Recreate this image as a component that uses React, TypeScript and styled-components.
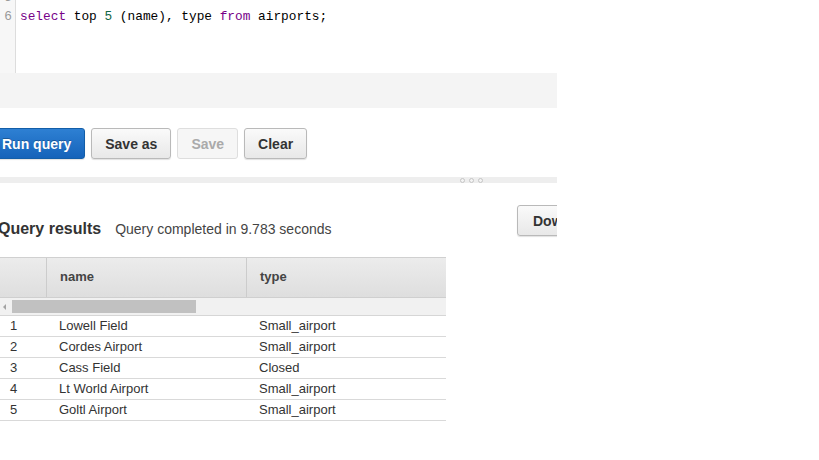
import React from "react";
import styled, { createGlobalStyle } from "styled-components";

const Global = createGlobalStyle`
  html, body { margin: 0; padding: 0; background: #fff; }
  body { font-family: "Liberation Sans", Arial, sans-serif; }
`;

const Page = styled.div`
  width: 557px;
  overflow: hidden;
  display: flex;
  flex-direction: column;
`;

const Editor = styled.div`
  height: 73px;
  display: flex;
  overflow: hidden;
  background: #fff;
`;

const Gutter = styled.div`
  width: 15px;
  background: #f7f7f7;
  border-right: 1px solid #dddddd;
  display: flex;
  flex-direction: column;
  margin-top: -12px;
`;

const LineNo = styled.div`
  height: 19px;
  line-height: 19px;
  font-family: "Liberation Mono", "DejaVu Sans Mono", monospace;
  font-size: 12.8px;
  color: #999;
  text-align: right;
  padding-right: 3px;
`;

const Code = styled.div`
  display: flex;
  flex-direction: column;
  margin-top: -12px;
  padding-left: 4px;
`;

const CodeLine = styled.div`
  height: 19px;
  line-height: 19px;
  font-family: "Liberation Mono", "DejaVu Sans Mono", monospace;
  font-size: 12.8px;
  color: #000;
  white-space: pre;
`;

const Kw = styled.span`
  color: #770088;
`;

const Num = styled.span`
  color: #116644;
`;

const EditorFooter = styled.div`
  height: 35px;
  background: #f4f4f4;
`;

const Toolbar = styled.div`
  height: 69px;
  display: flex;
  align-items: center;
  gap: 6px;
  padding-top: 2px;
  box-sizing: border-box;
`;

const Button = styled.button<{ $variant?: "primary" | "default" | "disabled" }>`
  height: 31px;
  padding: 0 13px;
  border-radius: 3px;
  font-family: "Liberation Sans", Arial, sans-serif;
  font-weight: bold;
  font-size: 14px;
  white-space: nowrap;
  cursor: pointer;
  border: 1px solid
    ${(p) => (p.$variant === "primary" ? "#135ea8" : p.$variant === "disabled" ? "#dedede" : "#b9b9b9")};
  background: ${(p) =>
    p.$variant === "primary"
      ? "linear-gradient(#2e80d3, #1563ba)"
      : p.$variant === "disabled"
      ? "#f6f6f6"
      : "linear-gradient(#fafafa, #e8e8e8)"};
  color: ${(p) => (p.$variant === "primary" ? "#fff" : p.$variant === "disabled" ? "#aaaaaa" : "#333")};
  text-shadow: ${(p) => (p.$variant === "primary" ? "0 -1px 0 rgba(0,0,0,0.25)" : "none")};
  box-shadow: ${(p) => (p.$variant === "disabled" ? "none" : "0 1px 1px rgba(0,0,0,0.12)")};
`;

const RunButton = styled(Button)`
  margin-left: -4px;
  padding: 0 13px 0 5px;
`;

const Splitter = styled.div`
  height: 6px;
  background: #eeeeee;
  display: flex;
  justify-content: flex-start;
  align-items: center;
  gap: 4px;
  padding-left: 460px;
`;

const Dot = styled.span`
  width: 5px;
  height: 5px;
  border-radius: 50%;
  box-sizing: border-box;
  border: 1px solid #c4c4c4;
  background: #f4f4f4;
`;

const ResultsHeader = styled.div`
  height: 74px;
  display: flex;
  align-items: flex-start;
  justify-content: space-between;
`;

const TitleGroup = styled.div`
  display: flex;
  align-items: baseline;
  margin-top: 37px;
  margin-left: -2px;
`;

const Title = styled.span`
  font-size: 16px;
  font-weight: bold;
  color: #333;
`;

const Subtitle = styled.span`
  font-size: 14px;
  color: #444;
  margin-left: 14px;
`;

const DownloadButton = styled(Button)`
  margin-top: 22px;
  margin-right: -60px;
  width: 100px;
  text-align: left;
  padding-left: 15px;
`;

const Table = styled.div`
  width: 446px;
  display: flex;
  flex-direction: column;
`;

const HeadRow = styled.div`
  height: 41px;
  display: grid;
  grid-template-columns: 46px 200px 200px;
  background: linear-gradient(#ececec, #dedede);
  border-top: 1px solid #d0d0d0;
  border-bottom: 1px solid #cfcfcf;
  box-sizing: border-box;
`;

const HeadCell = styled.div`
  display: flex;
  align-items: center;
  padding-left: 14px;
  padding-bottom: 2px;
  font-size: 13px;
  font-weight: bold;
  color: #444;
  & + & {
    border-left: 1px solid #cccccc;
    padding-left: 13px;
  }
`;

const ScrollTrack = styled.div`
  height: 17px;
  background: #f1f1f1;
  border-bottom: 1px solid #d6d6d6;
  display: flex;
  align-items: center;
  gap: 6px;
  padding-left: 3px;
`;

const Arrow = styled.span`
  width: 0;
  height: 0;
  border-top: 3px solid transparent;
  border-bottom: 3px solid transparent;
  border-right: 3px solid #a3a3a3;
`;

const Thumb = styled.div`
  width: 184px;
  height: 13px;
  background: #c1c1c1;
`;

const Row = styled.div`
  height: 21px;
  display: grid;
  grid-template-columns: 46px 200px 200px;
  border-bottom: 1px solid #d9d9d9;
  box-sizing: border-box;
`;

const Cell = styled.div<{ $index?: boolean }>`
  display: flex;
  align-items: center;
  padding-left: ${(p) => (p.$index ? "10px" : "13px")};
  padding-bottom: 1px;
  font-size: 13px;
  color: #333;
  white-space: nowrap;
`;

const rows = [
  ["1", "Lowell Field", "Small_airport"],
  ["2", "Cordes Airport", "Small_airport"],
  ["3", "Cass Field", "Closed"],
  ["4", "Lt World Airport", "Small_airport"],
  ["5", "Goltl Airport", "Small_airport"],
];

export default function App() {
  return (
    <>
      <Global />
      <Page>
        <Editor>
          <Gutter>
            <LineNo>5</LineNo>
            <LineNo>6</LineNo>
          </Gutter>
          <Code>
            <CodeLine> </CodeLine>
            <CodeLine>
              <Kw>select</Kw> top <Num>5</Num> (name), type <Kw>from</Kw> airports;
            </CodeLine>
          </Code>
        </Editor>
        <EditorFooter />
        <Toolbar>
          <RunButton $variant="primary">Run query</RunButton>
          <Button>Save as</Button>
          <Button $variant="disabled">Save</Button>
          <Button>Clear</Button>
        </Toolbar>
        <Splitter>
          <Dot />
          <Dot />
          <Dot />
        </Splitter>
        <ResultsHeader>
          <TitleGroup>
            <Title>Query results</Title>
            <Subtitle>Query completed in 9.783 seconds</Subtitle>
          </TitleGroup>
          <DownloadButton>Download</DownloadButton>
        </ResultsHeader>
        <Table>
          <HeadRow>
            <HeadCell />
            <HeadCell>name</HeadCell>
            <HeadCell>type</HeadCell>
          </HeadRow>
          <ScrollTrack>
            <Arrow />
            <Thumb />
          </ScrollTrack>
          {rows.map((r) => (
            <Row key={r[0]}>
              <Cell $index>{r[0]}</Cell>
              <Cell>{r[1]}</Cell>
              <Cell>{r[2]}</Cell>
            </Row>
          ))}
        </Table>
      </Page>
    </>
  );
}
